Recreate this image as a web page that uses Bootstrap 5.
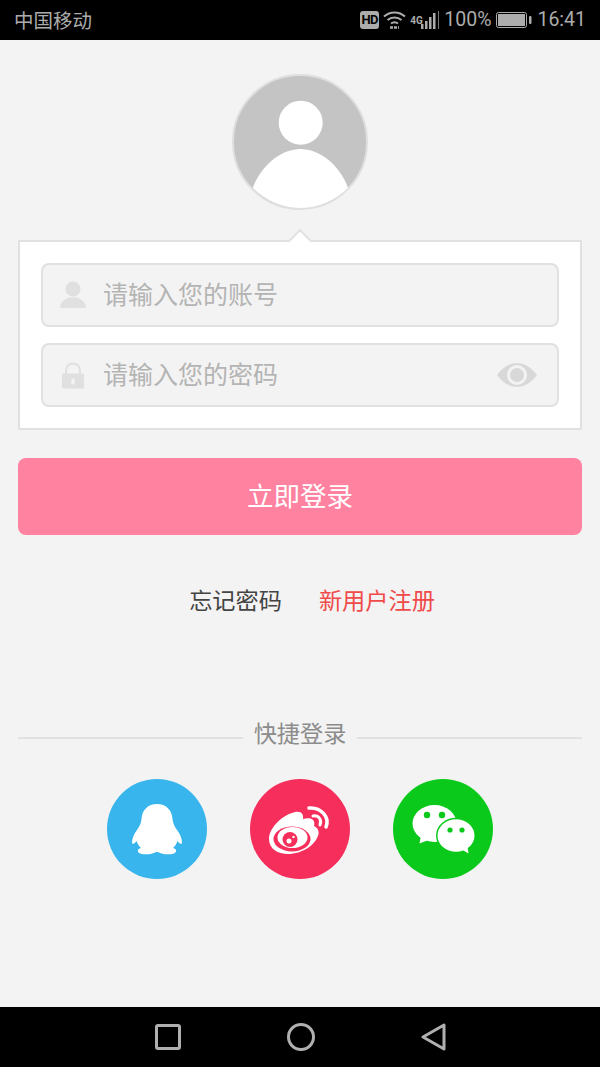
<!DOCTYPE html>
<html lang="zh-CN">
<head>
    <meta charset="UTF-8">
    <title>登录</title>
    <meta name="viewport" content="width=device-width, initial-scale=1">
    <link href="https://cdn.jsdelivr.net/npm/bootstrap@5.3.3/dist/css/bootstrap.min.css" rel="stylesheet">
    <style>
        body {
            width: 600px;
            height: 1067px;
            overflow: hidden;
            background: #f3f3f3;
            font-family: "Noto Sans CJK SC", "Liberation Sans", sans-serif;
        }
        .status-bar {
            height: 40px;
            background: #000;
            color: #acacac;
            font-size: 19.5px;
            padding: 0 14px;
            font-family: "Roboto", "Noto Sans CJK SC", sans-serif;
        }
        .status-carrier { font-family: "Noto Sans CJK SC", sans-serif; }
        .status-hd {
            width: 19px;
            height: 18px;
            background: #acacac;
            color: #000;
            border-radius: 3px;
            font-size: 13px;
            font-weight: 700;
            line-height: 18px;
            letter-spacing: -0.5px;
            text-align: center;
            margin-right: 4px;
        }
        .status-net {
            font-size: 10px;
            font-weight: 700;
            line-height: 9px;
            align-self: flex-start;
            margin: 11px 0 0 4px;
            width: 10px;
        }
        .status-sep {
            width: 1px;
            height: 18px;
            background: #777;
            margin: 0 5px 0 0;
        }
        .status-batt { margin: 0 5px; }
        .login-page { height: 967px; padding: 34px 18px 0; }
        .avatar-pic { width: 136px; height: 136px; display: block; margin: 0 auto 30px; }
        .login-panel {
            position: relative;
            height: 190px;
            background: #fff;
            border: 2px solid #e1e1e1;
            padding: 21px 21px 0;
        }
        .login-panel::before {
            content: "";
            position: absolute;
            top: -10px;
            left: 50%;
            width: 16px;
            height: 16px;
            margin-left: -8px;
            background: #fff;
            border-top: 2px solid #e1e1e1;
            border-left: 2px solid #e1e1e1;
            transform: rotate(45deg);
        }
        .login-field {
            height: 64px;
            background: #f3f3f3;
            border: 2px solid #e1e1e1;
            border-radius: 8px;
            padding: 0 20px 0 16px;
            margin-bottom: 16px;
        }
        .field-icon { flex: none; width: 28px; height: 28px; }
        .field-input {
            flex: 1;
            min-width: 0;
            border: 0;
            outline: 0;
            background: transparent;
            padding: 0 0 3px 16px;
            font-size: 25px;
            color: #444;
        }
        .field-input::placeholder { color: #b4b4b4; opacity: 1; }
        .login-btn {
            height: 77px;
            margin-top: 28px;
            padding-bottom: 9px;
            background: #ff82a0;
            border: 0;
            border-radius: 8px;
            color: #fff;
            font-size: 26.5px;
        }
        .login-btn:hover { background: #ff82a0; color: #fff; }
        .login-links {
            margin-top: 47px;
            padding-left: 24px;
            gap: 37px;
            font-size: 23.2px;
            line-height: 34px;
        }
        .login-links a { text-decoration: none; }
        .link-forgot { color: #444; }
        .link-register { color: #f04a4a; }
        .quick-title {
            margin-top: 99px;
            gap: 11px;
            font-size: 23.2px;
            line-height: 34px;
            color: #8c8c8c;
        }
        .quick-line { flex: 1; height: 2px; background: #e1e1e1; margin-top: 12px; }
        .quick-icons { margin-top: 30px; gap: 43px; }
        .quick-icons svg { width: 100px; height: 100px; display: block; }
        .nav-keys { height: 60px; background: #000; gap: 106px; }
        .nav-keys svg { display: block; }
    </style>
</head>
<body>
<div class="status-bar d-flex align-items-center justify-content-between">
    <span class="status-carrier">中国移动</span>
    <div class="d-flex align-items-center">
        <span class="status-hd">HD</span>
        <svg width="23" height="18" viewBox="0 0 23 18" fill="none" stroke="#acacac" stroke-width="2">
            <path d="M1 5.500C7 0 16 0 22 5.500"/>
            <path d="M4.500 9C8.500 5.500 14.500 5.500 18.500 9"/>
            <path d="M8 12.500C10 11 13 11 15 12.500"/>
            <path d="M7 16.500h9" stroke-width="2.500" stroke-dasharray="3 1"/>
        </svg>
        <span class="status-net">4G</span>
        <svg width="18" height="20" viewBox="0 0 18 20" fill="#acacac">
            <rect x="1" y="14" width="2.500" height="5"/>
            <rect x="5" y="11" width="2.500" height="8"/>
            <rect x="9" y="7" width="2.500" height="12"/>
            <rect x="13" y="3" width="2.500" height="16"/>
        </svg>
        <span class="status-sep"></span>
        <span>100%</span>
        <svg class="status-batt" width="36" height="18" viewBox="0 0 36 18">
            <rect x="0.500" y="1.500" width="30" height="15" rx="2" fill="none" stroke="#acacac"/>
            <rect x="2" y="3" width="27" height="12" fill="#acacac"/>
            <rect x="33" y="5" width="2.500" height="8" rx="1" fill="#acacac"/>
        </svg>
        <span>16:41</span>
    </div>
</div>

<div class="login-page">
    <svg class="avatar-pic" viewBox="0 0 136 136">
        <circle cx="68" cy="68" r="67" fill="#c4c4c4" stroke="#dfdfdf" stroke-width="2"/>
        <circle cx="68.700" cy="48.700" r="22" fill="#fff"/>
        <path d="M20.700 113.700C30 90 50 75 68.500 75C87 75 107 90 116 113.700A66 66 0 0 1 20.700 113.700Z" fill="#fff"/>
    </svg>

    <form class="login-panel">
        <div class="login-field d-flex align-items-center">
            <svg class="field-icon" viewBox="0 0 28 28" fill="#e0e0e0">
                <circle cx="14" cy="8" r="7.500"/>
                <path d="M1 27C1 21 6 18 10 16.500H18C22 18 27 21 27 27Z"/>
            </svg>
            <input class="field-input" type="text" placeholder="请输入您的账号">
        </div>
        <div class="login-field d-flex align-items-center">
            <svg class="field-icon" viewBox="0 0 28 28">
                <path d="M7 14V9.500C7 5.500 10 2.500 14 2.500S21 5.500 21 9.500V14" fill="none" stroke="#e0e0e0" stroke-width="2"/>
                <path d="M3 14C3 13 3.500 12.500 4.500 12.500H23.500C24.500 12.500 25 13 25 14V26C25 27 24.500 27.500 23.500 27.500H4.500C3.500 27.500 3 27 3 26Z" fill="#e0e0e0"/>
                <rect x="12.500" y="17.500" width="3" height="6" rx="1" fill="#f3f3f3"/>
            </svg>
            <input class="field-input" type="password" placeholder="请输入您的密码">
            <svg class="flex-none" width="40" height="24" viewBox="0 0 40 24">
                <path d="M0 12C6 4 13 0 20 0S34 4 40 12C34 20 27 24 20 24S6 20 0 12Z" fill="#d8d8d8"/>
                <circle cx="20" cy="12" r="10" fill="#f3f3f3"/>
                <circle cx="20" cy="12" r="7" fill="#d8d8d8"/>
            </svg>
        </div>
    </form>

    <button type="button" class="btn login-btn w-100">立即登录</button>

    <div class="login-links d-flex justify-content-center">
        <a class="link-forgot" href="#">忘记密码</a>
        <a class="link-register" href="#">新用户注册</a>
    </div>

    <div class="quick-title d-flex align-items-center">
        <span class="quick-line"></span>
        <span>快捷登录</span>
        <span class="quick-line"></span>
    </div>

    <div class="quick-icons d-flex justify-content-center">
        <a href="#" aria-label="QQ">
            <svg viewBox="0 0 100 100">
                <circle cx="50" cy="50" r="50" fill="#37b5ec"/>
                <path d="M50 25C41 25 35 31 34.500 40C34 45 32 48 30 51C27 55 25 59 25 64C26 66 28 64 29.500 62C30.500 65 32 67 34 69C30 70 30 73 33 74.500C38 76 45 75.500 49 73H51C55 75.500 62 76 67 74.500C70 73 70 70 66 69C68 67 69.500 65 70.500 62C72 64 74 66 75 64C75 59 73 55 70 51C68 48 66 45 65.500 40C65 31 59 25 50 25Z" fill="#fff"/>
            </svg>
        </a>
        <a href="#" aria-label="微博">
            <svg viewBox="0 0 100 100">
                <circle cx="50" cy="50" r="50" fill="#f62e5b"/>
                <path d="M19 60C19 50 30 38 42 34C50 31 54 34 53 40C60 38 66 40 64 47C68 49 69 52 68.500 55C66 66 52 75 38 75C28 75 19 70 19 60Z" fill="#fff"/>
                <ellipse cx="42" cy="60" rx="18.500" ry="12.500" fill="#f62e5b"/>
                <ellipse cx="42.500" cy="58.500" rx="15" ry="10.500" fill="#fff"/>
                <circle cx="40" cy="60.500" r="7.500" fill="#f62e5b"/>
                <circle cx="39" cy="62" r="2.500" fill="#fff"/>
                <circle cx="43.500" cy="58" r="1.200" fill="#fff"/>
                <path d="M59 29C71 28 80 38 76 48" fill="none" stroke="#fff" stroke-width="3.500" stroke-linecap="round"/>
                <path d="M63 37C69 36 72 41 70 46" fill="none" stroke="#fff" stroke-width="3" stroke-linecap="round"/>
            </svg>
        </a>
        <a href="#" aria-label="微信">
            <svg viewBox="0 0 100 100">
                <circle cx="50" cy="50" r="50" fill="#0bc91b"/>
                <ellipse cx="41.500" cy="44.500" rx="22" ry="18.500" fill="#fff"/>
                <path d="M28 56L26.500 64.500L38 60Z" fill="#fff"/>
                <circle cx="34" cy="36" r="3.200" fill="#0bc91b"/>
                <circle cx="49" cy="36" r="3.200" fill="#0bc91b"/>
                <ellipse cx="63" cy="56.500" rx="20" ry="17.800" fill="#0bc91b"/>
                <ellipse cx="63" cy="56.500" rx="18.500" ry="16.300" fill="#fff"/>
                <path d="M68 70L75.500 74.500L74 65Z" fill="#fff"/>
                <circle cx="57" cy="51" r="2.600" fill="#0bc91b"/>
                <circle cx="69" cy="51" r="2.600" fill="#0bc91b"/>
            </svg>
        </a>
    </div>
</div>

<div class="nav-keys d-flex align-items-center justify-content-center">
    <svg width="26" height="26" viewBox="0 0 26 26" fill="none" stroke="#b0b0b0" stroke-width="3">
        <rect x="1.500" y="1.500" width="23" height="23" rx="1.500"/>
    </svg>
    <svg width="28" height="28" viewBox="0 0 28 28" fill="none" stroke="#b0b0b0" stroke-width="3">
        <circle cx="14" cy="14" r="12.500"/>
    </svg>
    <svg width="25" height="28" viewBox="0 0 25 28" fill="none" stroke="#b0b0b0" stroke-width="3" stroke-linejoin="round">
        <path d="M23 2V26L2 14Z"/>
    </svg>
</div>
</body>
</html>
